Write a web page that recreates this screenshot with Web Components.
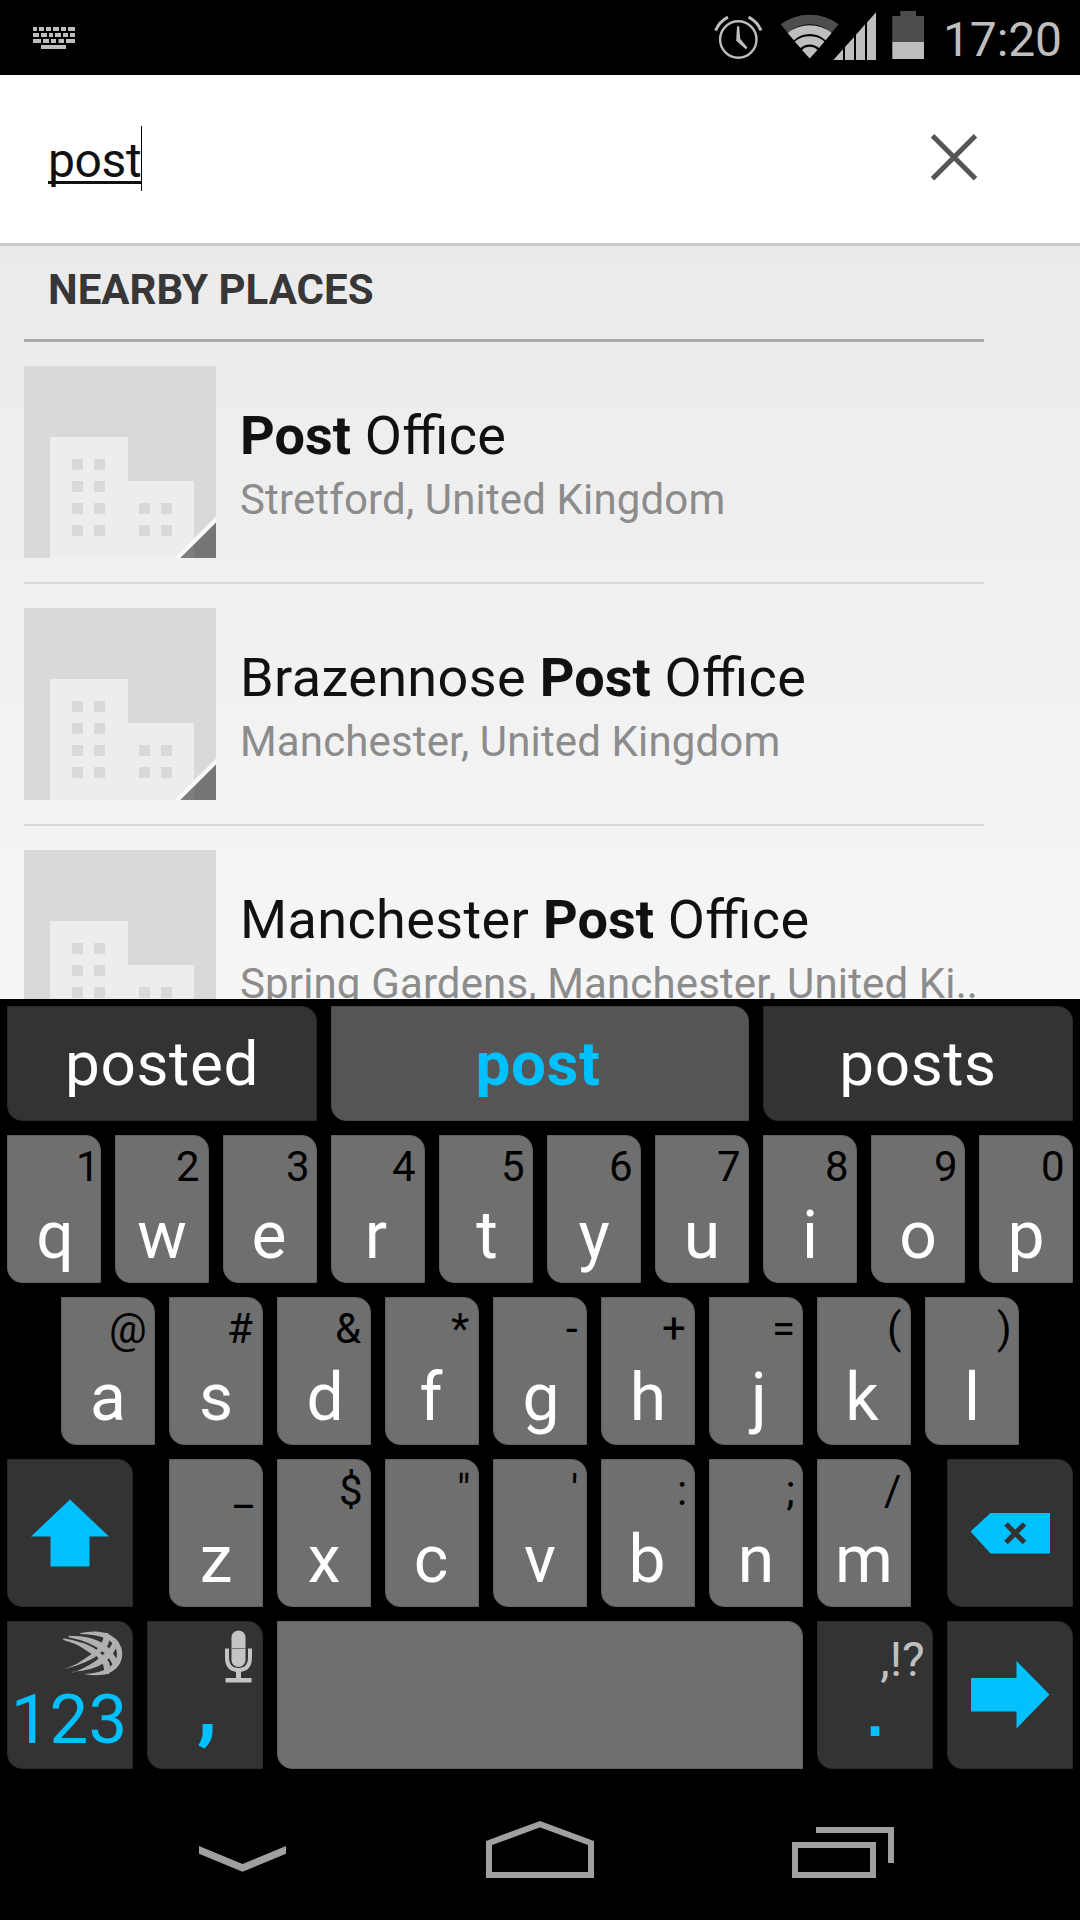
<!DOCTYPE html>
<html lang="en">
<head>
<meta charset="utf-8">
<title>Nearby places</title>
<style>
  html, body { margin: 0; background: #000; }
  body { width: 1080px; height: 1920px; overflow: hidden; font-family: Roboto, "Noto Sans", sans-serif; }
</style>
</head>
<body>
<phone-screen>
  <status-bar time="17:20"></status-bar>
  <search-bar value="post"></search-bar>
  <place-list heading="NEARBY PLACES">
    <place-row><b>Post</b> Office<span slot="where">Stretford, United Kingdom</span></place-row>
    <place-row>Brazennose <b>Post</b> Office<span slot="where">Manchester, United Kingdom</span></place-row>
    <place-row>Manchester <b>Post</b> Office<span slot="where">Spring Gardens, Manchester, United Ki..</span></place-row>
  </place-list>
  <soft-keyboard></soft-keyboard>
  <nav-bar></nav-bar>
</phone-screen>

<script>
const define = (name, html, setup) => {
  const tpl = document.createElement('template');
  tpl.innerHTML = html;
  customElements.define(name, class extends HTMLElement {
    connectedCallback() {
      if (this.shadowRoot) return;
      this.attachShadow({ mode: 'open' }).appendChild(tpl.content.cloneNode(true));
      if (setup) setup.call(this, this.shadowRoot);
    }
  });
};

define('phone-screen', `
  <style>
    :host { display: flex; flex-direction: column; width: 1080px; height: 1920px; overflow: hidden; background: #000; }
  </style>
  <slot></slot>`);

/* ---------- status bar ---------- */
define('status-bar', `
  <style>
    :host { display: flex; align-items: flex-start; height: 75px; flex: none; background: #000; color: #bebebe; }
    svg { display: block; flex: none; }
    .kb { margin: 27px 0 0 33px; }
    .right { margin-left: auto; }
    time { width: 150px; padding-right: 18px; box-sizing: border-box; text-align: right;
           font-size: 48px; line-height: 79px; letter-spacing: -.1px; white-space: nowrap; }
  </style>
  <svg class="kb" width="42" height="22" fill="#bebebe">
    <path d="M0 0h4v4H0zM6 0h5v4H6zM13 0h5v4h-5zM20 0h6v4h-6zM28 0h5v4h-5zM35 0h7v4h-7z"/>
    <path d="M0 6h6v4H0zM8 6h6v4H8zM16 6h4v4h-4zM22 6h6v4h-6zM30 6h5v4h-5zM37 6h5v4h-5z"/>
    <path d="M0 12h8v4H0zM10 12h6v4h-6zM18 12h5v4h-5zM25.5 12h5.500v4h-5.500zM33 12h9v4h-9zM8 18h25v4H8z"/>
  </svg>
  <svg class="right" width="220" height="75" viewBox="710 0 220 75">
    <!-- alarm -->
    <g fill="none" stroke="#bebebe">
      <circle cx="738.300" cy="39.500" r="18.200" stroke-width="2.400"/>
      <path d="M715.600 30.500Q719.500 21.500 728 17.200M761 30.500Q757.100 21.500 748.600 17.200" stroke-width="3"/>
    </g>
    <path d="M737 26.200h2.200l1 12.600 7.200 8.600-1.600 1.800-9.600-8.400z" fill="#bebebe"/>
    <!-- wifi -->
    <path d="M780.700 24.300Q793.500 14.800 809.700 14.800T838.700 24.300L831.600 32.700Q821.500 24.300 809.700 24.300T787.800 32.700Z" fill="#4d4d4d"/>
    <g fill="#bebebe">
      <path d="M787.700 32.900Q797 25.200 809.700 25.200T831.700 32.900L825.600 40.200Q818.500 34 809.700 34T793.800 40.200Z"/>
      <path d="M794.800 41.400Q801 36.200 809.700 36.200T824.600 41.400L819 48.100Q815 44.600 809.700 44.600T800.400 48.100Z"/>
      <path d="M802 49.900Q805 46.800 809.700 46.800T817.400 49.900L809.700 58.400Z"/>
      <!-- signal -->
      <path d="M833.300 60L843 49.200V60zM845 60V47L854 36.900V60zM856 60V34.700L865 24.600V60zM867 60V22.400L876 12.300V60z"/>
    </g>
    <!-- battery -->
    <path d="M892.300 42V16H900.300V11H916V16H924V42z" fill="#4d4d4d"/>
    <path d="M892.300 42H924V59H892.300z" fill="#bebebe"/>
  </svg>
  <time></time>`, function (root) {
  root.querySelector('time').textContent = this.getAttribute('time');
});

/* ---------- search field ---------- */
define('search-bar', `
  <style>
    :host { display: flex; align-items: flex-start; justify-content: space-between; box-sizing: border-box; flex: none;
            height: 171px; padding: 51px 102px 0 48px; background: #fff; border-bottom: 3px solid #ccc; }
    .field { display: flex; height: 65px; border-right: 1px solid #000; }
    .value { height: 55px; line-height: 69px; font-size: 48px; letter-spacing: -.4px; color: #111; border-bottom: 3px solid #111; }
    svg { display: block; margin-top: 7px; }
  </style>
  <div class="field"><div class="value"></div></div>
  <svg width="48" height="48" viewBox="0 0 48 48"><path d="M2.500 2.700L45.500 45.700M45.500 2.700L2.500 45.700" stroke="#555" stroke-width="5"/></svg>`,
function (root) {
  root.querySelector('.value').textContent = this.getAttribute('value');
});

/* ---------- results ---------- */
define('place-list', `
  <style>
    :host { display: block; height: 753px; flex: none; overflow: hidden; box-sizing: border-box; padding: 0 96px 0 24px;
            background: linear-gradient(#ebebeb, #f6f6f6); }
    h2 { margin: 0; height: 93px; padding-left: 24px; border-bottom: 3px solid #a9a9a9;
         font-size: 42px; line-height: 87px; font-weight: 700; color: #373737; white-space: nowrap; }
  </style>
  <h2></h2>
  <slot></slot>`, function (root) {
  root.querySelector('h2').textContent = this.getAttribute('heading');
});

define('place-row', `
  <style>
    :host { display: flex; gap: 24px; padding: 24px 0; border-bottom: 2px solid #d8d8d8; white-space: nowrap; }
    svg { display: block; flex: none; background: #d9d9d9; }
    .text { display: flex; flex-direction: column; padding-top: 33px; min-width: 0; }
    .name { font-size: 54px; line-height: 73px; color: #111; letter-spacing: .38px; font-feature-settings: "liga" 1; }
    .where { font-size: 42px; line-height: 56px; color: #8c8c8c; letter-spacing: .14px; }
    ::slotted(b) { letter-spacing: 0; }
  </style>
  <svg width="192" height="192" viewBox="0 0 192 192">
    <path d="M26 192V71H104V115H170V192z" fill="#ededed"/>
    <g fill="#d9d9d9">
      <path d="M48 93h11v11H48zM70 93h11v11H70zM48 115h11v11H48zM70 115h11v11H70zM48 137h11v11H48zM70 137h11v11H70zM48 159h11v11H48zM70 159h11v11H70z"/>
      <path d="M115 137h11v11h-11zM137 137h11v11h-11zM115 159h11v11h-11zM137 159h11v11h-11z"/>
    </g>
    <path d="M150.500 192L192 150.500V192z" fill="#fafafa"/>
    <path d="M156.500 192L192 156.500V192z" fill="#757575"/>
    <path d="M156.500 192L170 178.500V192z" fill="#7e7e7e"/>
  </svg>
  <div class="text">
    <div class="name"><slot></slot></div>
    <div class="where"><slot name="where"></slot></div>
  </div>`);

/* ---------- keyboard ---------- */
// Glyphs on the keys line up by their ink, not by their advance width.
const ruler = document.createElement('canvas').getContext('2d');
function inkOf(el) {
  const cs = getComputedStyle(el);
  ruler.font = `${cs.fontWeight} ${cs.fontSize} ${cs.fontFamily}`;
  const m = ruler.measureText(el.textContent);
  return { width: m.width, left: -m.actualBoundingBoxLeft, right: m.actualBoundingBoxRight };
}

define('kb-key', `
  <style>
    :host { display: block; box-sizing: border-box; height: 147.400px; border-radius: 0 15px 0 15px; overflow: hidden;
            background: #6f6f6f; color: #fff; border: 1px solid #606060; margin: 0 7.400px; }
    :host([dark]) { background: #333; color: #00c1ff; border-color: #2a2a2a; }
    .hint { display: flex; justify-content: flex-end; height: 61px; font-size: var(--hint-size, 42px);
            line-height: var(--hint-line, 61px); color: #000; white-space: nowrap; }
    :host([dark]) .hint { color: #c0c0c0; }
    .label { display: flex; justify-content: center; font-size: var(--size, 66px); line-height: var(--line, 78px);
             font-weight: var(--weight, 400); font-family: var(--face, inherit); white-space: nowrap; }
    :host([icon]) .hint, :host([icon]) .label { display: none; }
    ::slotted(svg) { display: block; flex: none; }
  </style>
  <div class="hint"><slot name="hint"><span></span></slot></div>
  <div class="label"><span></span></div>
  <slot name="icon"></slot>`, function (root) {
  const hint = root.querySelector('.hint span');
  const label = root.querySelector('.label span');
  hint.textContent = this.getAttribute('hint') || '';
  label.textContent = this.getAttribute('label') || '';
  if (hint.textContent) {
    const i = inkOf(hint);
    hint.style.marginRight = `${8.5 - (i.width - i.right)}px`;
  }
  if (label.textContent) {
    const i = inkOf(label);
    label.style.transform = `translateX(${Math.round(i.width / 2 - (i.left + i.right) / 2)}px)`;
  }
});

define('kb-word', `
  <style>
    :host { display: block; box-sizing: border-box; height: 114.500px; margin: 0 7.400px; border-radius: 0 15px 0 15px;
            border: 1px solid #2a2a2a; background: #333; color: #fff; text-align: center; font-size: 62px; line-height: 113px;
            letter-spacing: .6px; }
    :host([picked]) { background: #555; border-color: #4a4a4a; color: #00c1ff; font-weight: 700; padding-right: 4px; }
  </style>
  <slot></slot>`);

const key = ([label, hint]) => `<kb-key label='${label}' hint="${hint === '"' ? '&quot;' : hint}"></kb-key>`;
const keys = (labels, hints) => [...labels].map((c, i) => key([c, hints[i]])).join('');

define('soft-keyboard', `
  <style>
    :host { display: flex; flex-direction: column; flex: none; height: 777px; box-sizing: border-box; padding-top: 7.400px; background: #000; }
    .words { display: grid; grid-template-columns: 324px 432px 324px; height: 129px; flex: none; }
    .row { display: grid; height: 162px; flex: none; grid-template-columns: repeat(10, 108px); }
    .home { grid-template-columns: repeat(9, 108px); padding: 0 54px; }
    .lower { grid-template-columns: 140px 22px repeat(7, 108px) 22px 140px; }
    .lower > :last-child { grid-column: 11; }
    .lower > :nth-child(2) { grid-column: 3; }
    .bottom { grid-template-columns: 140px 130px 540px 130px 140px; }
  </style>
  <div class="words">
    <kb-word>posted</kb-word>
    <kb-word picked>post</kb-word>
    <kb-word>posts</kb-word>
  </div>
  <div class="row">${keys('qwertyuiop', '1234567890')}</div>
  <div class="row home">${keys('asdfghjkl', '@#&*-+=()')}</div>
  <div class="row lower">
    <kb-key dark icon>
      <svg slot="icon" width="124" height="145" viewBox="0 0 124 145"><path d="M62 39.500L101 76.500H81.500V106.500H42.500V76.500H23z" fill="#00c1ff"/></svg>
    </kb-key>
    ${keys('zxcvbnm', '_$"\':;/')}
    <kb-key dark icon>
      <svg slot="icon" width="124" height="145" viewBox="0 0 124 145">
        <path d="M22.500 71.500L42.500 53H102V93.500H42.500z" fill="#00c1ff"/>
        <path d="M58 64L76.500 82.500M76.500 64L58 82.500" stroke="#333" stroke-width="5"/>
      </svg>
    </kb-key>
  </div>
  <div class="row bottom">
    <kb-key dark label="123" style="--size:69px; --line:73px">
      <svg slot="hint" width="80" height="60" viewBox="-7 -9 240 180" fill="#b0b0b0">
        <path d="M27 40Q98 50 140 84Q100 116 27 133Q86 112 118 87Q86 62 27 45z"/>
        <path d="M66 57Q106 64 132 86Q108 104 66 118L112 87z"/>
        <path d="M112 72Q152 88 164 112Q170 128 164 147L148 148Q154 122 136 106zM112 98Q152 80 162 58Q167 42 161 24L146 23Q152 46 132 66z"/>
        <path d="M43 32Q116 32 154 60Q182 84 193 120L181 134Q170 100 144 79Q108 50 43 37z"/>
        <path d="M55 140Q116 138 152 112Q181 86 193 52L181 38Q170 72 142 93Q108 124 55 143z"/>
        <path d="M78 24Q134 12 168 30Q204 52 204 86Q204 120 172 140Q140 157 88 147Q130 146 156 132Q188 114 188 86Q188 60 158 42Q130 28 78 27z"/>
      </svg>
    </kb-key>
    <kb-key dark label="," style="--size:84px; --weight:700; --line:46px">
      <svg slot="hint" width="37" height="64" viewBox="0 0 37 64">
        <rect x="6.500" y="8.500" width="14" height="36.500" rx="7" fill="#c4c4c4"/>
        <path d="M6.500 26.500H20.500" stroke="#777" stroke-width="1.200"/>
        <path d="M2 26.500V35Q2 48 13.500 48T25 35V26.500" fill="none" stroke="#c4c4c4" stroke-width="4"/>
        <path d="M11 48H16V56H26.500V60.500H.5V56H11z" fill="#c4c4c4"/>
      </svg>
    </kb-key>
    <kb-key></kb-key>
    <kb-key dark label="." hint=",!?" style="--face:'Liberation Sans', sans-serif; --size:90px; --line:45px; --hint-size:48px; --hint-line:76px"></kb-key>
    <kb-key dark icon>
      <svg slot="icon" width="124" height="145" viewBox="0 0 124 145"><path d="M23 56H68.500V39L101.500 72.500L68.500 106.500V89.500H23z" fill="#00c1ff"/></svg>
    </kb-key>
  </div>`);

/* ---------- navigation ---------- */
define('nav-bar', `
  <style>
    :host { display: grid; grid-template-columns: repeat(3, 298px); justify-content: center; align-items: start;
            justify-items: center; height: 144px; flex: none; }
    svg { display: block; margin-top: 40px; }
  </style>
  <svg width="120" height="70" viewBox="182 1816 120 70"><path d="M199 1846L242.500 1864L286 1846V1853.700L242.500 1871.800L199 1853.700z" fill="#a0a0a0"/></svg>
  <svg width="120" height="70" viewBox="480 1816 120 70"><path d="M489 1875V1843L540 1824.300L591 1843V1875z" fill="none" stroke="#a0a0a0" stroke-width="6"/></svg>
  <svg width="120" height="70" viewBox="778 1816 120 70" fill="none" stroke="#a0a0a0" stroke-width="6"><path d="M795 1845H873V1875H795zM816 1830H891V1863"/></svg>`);
</script>
</body>
</html>
